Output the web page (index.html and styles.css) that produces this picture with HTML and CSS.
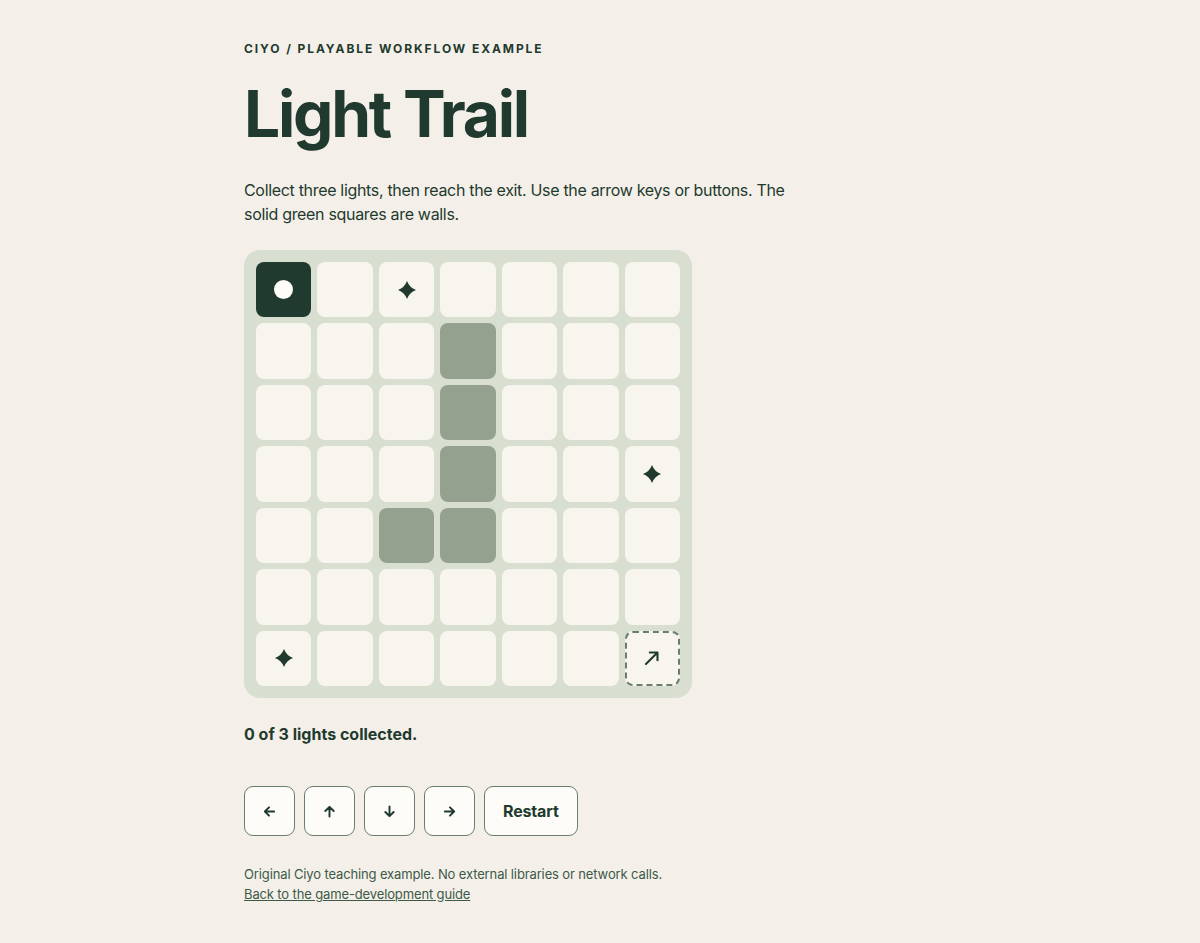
FILE: index.html
```html
<!DOCTYPE html>
<html lang="en">
<head>
<meta charset="utf-8">
<title>Light Trail</title>
<link rel="stylesheet" href="styles.css">
</head>
<body>
<main class="page">
  <p class="eyebrow">Ciyo / Playable workflow example</p>
  <h1 class="title">Light Trail</h1>
  <p class="intro">Collect three lights, then reach the exit. Use the arrow keys or buttons. The solid green squares are walls.</p>

  <div class="board">
    <div class="cell player"><span class="dot"></span></div>
    <div class="cell"></div>
    <div class="cell"><svg class="star" viewBox="0 0 20 20"><path d="M10 0 Q12.7 7.3 20 10 Q12.7 12.7 10 20 Q7.3 12.7 0 10 Q7.3 7.3 10 0 Z"/></svg></div>
    <div class="cell"></div>
    <div class="cell"></div>
    <div class="cell"></div>
    <div class="cell"></div>

    <div class="cell"></div>
    <div class="cell"></div>
    <div class="cell"></div>
    <div class="cell wall"></div>
    <div class="cell"></div>
    <div class="cell"></div>
    <div class="cell"></div>

    <div class="cell"></div>
    <div class="cell"></div>
    <div class="cell"></div>
    <div class="cell wall"></div>
    <div class="cell"></div>
    <div class="cell"></div>
    <div class="cell"></div>

    <div class="cell"></div>
    <div class="cell"></div>
    <div class="cell"></div>
    <div class="cell wall"></div>
    <div class="cell"></div>
    <div class="cell"></div>
    <div class="cell"><svg class="star" viewBox="0 0 20 20"><path d="M10 0 Q12.7 7.3 20 10 Q12.7 12.7 10 20 Q7.3 12.7 0 10 Q7.3 7.3 10 0 Z"/></svg></div>

    <div class="cell"></div>
    <div class="cell"></div>
    <div class="cell wall"></div>
    <div class="cell wall"></div>
    <div class="cell"></div>
    <div class="cell"></div>
    <div class="cell"></div>

    <div class="cell"></div>
    <div class="cell"></div>
    <div class="cell"></div>
    <div class="cell"></div>
    <div class="cell"></div>
    <div class="cell"></div>
    <div class="cell"></div>

    <div class="cell"><svg class="star" viewBox="0 0 20 20"><path d="M10 0 Q12.7 7.3 20 10 Q12.7 12.7 10 20 Q7.3 12.7 0 10 Q7.3 7.3 10 0 Z"/></svg></div>
    <div class="cell"></div>
    <div class="cell"></div>
    <div class="cell"></div>
    <div class="cell"></div>
    <div class="cell"></div>
    <div class="cell exit"><svg class="exit-icon" viewBox="0 0 20 20"><path d="M4.5 15.5 L15 5 M8 5 H15 V12"/></svg></div>
  </div>

  <p class="status">0 of 3 lights collected.</p>

  <div class="controls">
    <button class="btn btn-arrow" type="button" aria-label="Move left"><svg class="arrow" viewBox="0 0 14 14"><path d="M12 7 H2 M6.5 2.5 L2 7 L6.5 11.5"/></svg></button>
    <button class="btn btn-arrow" type="button" aria-label="Move up"><svg class="arrow" viewBox="0 0 14 14"><path d="M7 12.5 V2 M2.5 6.5 L7 2 L11.5 6.5"/></svg></button>
    <button class="btn btn-arrow" type="button" aria-label="Move down"><svg class="arrow" viewBox="0 0 14 14"><path d="M7 1.5 V12 M2.5 7.5 L7 12 L11.5 7.5"/></svg></button>
    <button class="btn btn-arrow" type="button" aria-label="Move right"><svg class="arrow" viewBox="0 0 14 14"><path d="M2 7 H12 M7.5 2.5 L12 7 L7.5 11.5"/></svg></button>
    <button class="btn btn-text" type="button">Restart</button>
  </div>

  <footer class="footer">
    <p>Original Ciyo teaching example. No external libraries or network calls.</p>
    <p><a href="#">Back to the game-development guide</a></p>
  </footer>
</main>
</body>
</html>
```

FILE: styles.css
```css
* { box-sizing: border-box; }

html, body {
  margin: 0;
  padding: 0;
  background: #f4f0e9;
  color: #1f3a2e;
  font-family: Inter, "Noto Sans", "Liberation Sans", sans-serif;
}

.page {
  max-width: 712px;
  margin: 0 auto;
  padding: 41px 0 40px;
}

.eyebrow {
  margin: 0;
  font-size: 12px;
  line-height: 16px;
  font-weight: 700;
  letter-spacing: 0.16em;
  text-transform: uppercase;
  color: #1f3a2e;
}

.title {
  margin: 18px 0 0;
  font-size: 64px;
  line-height: 78px;
  font-weight: 700;
  letter-spacing: -0.035em;
  color: #213a2f;
}

.intro {
  margin: 25px 0 0;
  max-width: 560px;
  font-size: 16px;
  line-height: 24px;
  letter-spacing: -0.02em;
  color: #1f3a2e;
}

.board {
  margin-top: 24px;
  width: 448px;
  height: 448px;
  padding: 12px;
  background: #d8dfd0;
  border-radius: 16px;
  display: grid;
  grid-template-columns: repeat(7, 1fr);
  grid-template-rows: repeat(7, 1fr);
  gap: 6px;
}

.cell {
  background: #f8f5ef;
  border-radius: 8px;
  display: flex;
  align-items: center;
  justify-content: center;
}

.cell.wall { background: #93a18e; }

.cell.player { background: #213a2f; }

.dot {
  width: 19px;
  height: 19px;
  border-radius: 50%;
  background: #fffdf7;
}

.star {
  width: 18px;
  height: 18px;
  fill: #213a2f;
}

.cell.exit {
  border: 2px dashed #6b7d6e;
}

.exit-icon {
  width: 22px;
  height: 22px;
  fill: none;
  stroke: #213a2f;
  stroke-width: 1.9;
  stroke-linecap: round;
  stroke-linejoin: round;
}

.status {
  margin: 24px 0 0;
  font-size: 16px;
  line-height: 24px;
  font-weight: 700;
  color: #1f3a2e;
}

.controls {
  margin-top: 40px;
  display: flex;
  gap: 9px;
}

.btn {
  height: 50px;
  border: 1px solid #6b7d6e;
  border-radius: 9px;
  background: #fdfcf8;
  color: #1f3a2e;
  font-family: inherit;
  font-size: 16px;
  font-weight: 700;
  padding: 0 18px;
  cursor: pointer;
  display: flex;
  align-items: center;
  justify-content: center;
}

.btn-arrow { width: 51px; padding: 0; }

.arrow {
  width: 13px;
  height: 13px;
  fill: none;
  stroke: #1f3a2e;
  stroke-width: 2.1;
  stroke-linecap: round;
  stroke-linejoin: round;
}

.btn-text { padding: 0 18px; letter-spacing: -0.01em; }

.footer {
  margin-top: 28px;
  font-size: 13px;
  line-height: 20px;
  letter-spacing: -0.01em;
  color: #3d5a48;
}

.footer p { margin: 0; }

.footer a { color: #3d5a48; text-decoration: underline; }
```
